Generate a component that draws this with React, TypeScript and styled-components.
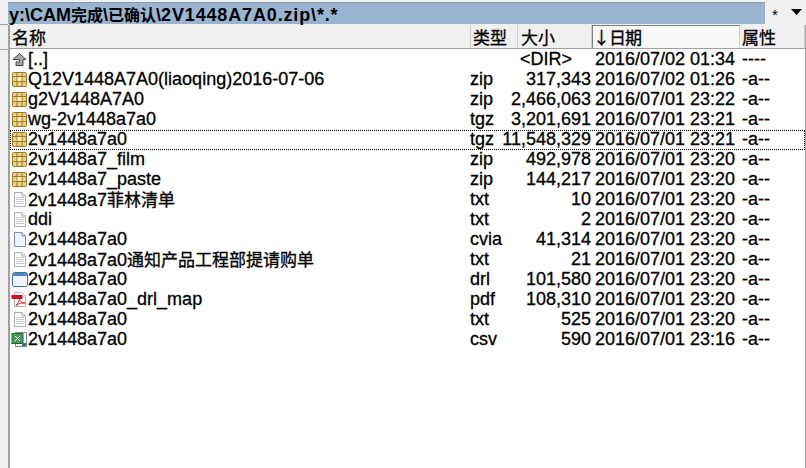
import React from 'react'
import styled, { createGlobalStyle } from 'styled-components'

const GlobalStyle = createGlobalStyle`
  html, body {
    margin: 0;
    padding: 0;
    background: #f0f0f0;
  }
`

const Window = styled.div`
  width: 806px;
  height: 468px;
  overflow: hidden;
  display: flex;
  background: #f0f0f0;
  font-family: "Liberation Sans", "Noto Sans CJK SC", sans-serif;
  color: #000;
`

const Gutter = styled.div`
  width: 8px;
  flex: none;
  height: 24px;
  margin-top: 24px;
  border-top: 1px solid #a0a0a0;
  border-bottom: 1px solid #a0a0a0;
`

const Main = styled.div`
  flex: 1;
  display: flex;
  flex-direction: column;
  min-width: 0;
`

const PathRow = styled.div`
  height: 25px;
  display: flex;
  align-items: flex-start;
  flex: none;
`

const PathBar = styled.div`
  width: 757px;
  height: 22px;
  margin-top: 2px;
  background: #99b4d1;
  border-top: 1px solid #8c9bac;
  font-size: 18px;
  font-weight: bold;
  line-height: 22px;
  padding-left: 1px;
  box-sizing: border-box;
  white-space: nowrap;
`

const PathTail = styled.span`
  letter-spacing: 0.85px;
`

const Cjk = styled.span<{ $bold?: boolean }>`
  font-family: "Noto Sans CJK SC", sans-serif;
  font-size: ${p => (p.$bold ? 16 : 17)}px;
  font-weight: ${p => (p.$bold ? 700 : 400)};
`

const Filter = styled.div`
  flex: 1;
  display: flex;
  align-items: center;
  height: 24px;
  padding-left: 7px;
  gap: 13px;
`

const FilterStar = styled.span`
  font-size: 15px;
  line-height: 15px;
  padding-top: 5px;
`

const Panel = styled.div`
  flex: 1;
  display: flex;
  flex-direction: column;
  background: #fff;
  border-left: 2px solid #a0a0a0;
  border-right: 1px solid #a0a0a0;
`

const Header = styled.div`
  height: 23px;
  display: flex;
  flex: none;
  margin-bottom: 1px;
  background: #f0f0f0;
  border-bottom: 1px solid #a0a0a0;
`

const HeaderCell = styled.div<{ $w: number; $pad?: number; $active?: boolean }>`
  width: ${p => p.$w}px;
  flex: none;
  box-sizing: border-box;
  padding-left: ${p => p.$pad ?? 2}px;
  font-family: "Noto Sans CJK SC", sans-serif;
  font-size: 17px;
  line-height: 23px;
  white-space: nowrap;
  -webkit-text-stroke: 0.3px #000;
  border-right: 1px solid #d0d0d0;
  ${p => p.$active && `
    background: #f7f7f7;
    border-top: 1px solid #808080;
    border-left: 1px solid #808080;
    line-height: 22px;
    letter-spacing: -1px;
  `}
`

const Row = styled.div<{ $focus?: boolean }>`
  height: 20px;
  display: flex;
  align-items: center;
  box-sizing: border-box;
  font-size: 18px;
  line-height: 19px;
  padding-bottom: 1px;
  -webkit-text-stroke: 0.3px #000;
  white-space: nowrap;
  outline: ${p => (p.$focus ? '1px dotted #000' : 'none')};
  outline-offset: -1px;
`

const IconSlot = styled.div`
  width: 18px;
  height: 17px;
  flex: none;
  padding-left: 1px;
  box-sizing: border-box;
`

const NameCell = styled.div`
  width: 442px;
  flex: none;
`

const TypeCell = styled.div`
  width: 40px;
  flex: none;
`

const SizeCell = styled.div<{ $dir?: boolean }>`
  width: 81px;
  flex: none;
  display: flex;
  justify-content: flex-end;
  box-sizing: border-box;
  padding-right: ${p => (p.$dir ? 19 : 0)}px;
`

const DateCell = styled.div`
  width: 151px;
  flex: none;
  padding-left: 4px;
  box-sizing: border-box;
`

const AttrCell = styled.div`
  flex: 1;
`

const Caret = styled.svg`
  width: 11px;
  height: 6px;
`

type IconKind = 'up' | 'archive' | 'text' | 'doc' | 'window' | 'pdf' | 'excel'

const FileIcon = ({ kind }: { kind: IconKind }) => {
  switch (kind) {
    case 'up':
      return (
        <svg width="17" height="17" viewBox="0 0 17 17">
          <path d="M8.5 2.5 L15 8.5 H12 V14.5 H5 V11 H8.5 V8.5 H2 Z" fill="#a8a8a8" stroke="#444" />
        </svg>
      )
    case 'archive':
      return (
        <svg width="17" height="17" viewBox="0 0 17 17">
          <rect x="1.5" y="1.5" width="14" height="14" rx="1.5" fill="#edd084" stroke="#9a7a2c" />
          <path d="M1.5 5.5 H15.5 M1.5 10.5 H15.5 M6 1.5 V15.5 M11 1.5 V15.5" stroke="#9a7a2c" fill="none" />
          <rect x="6.5" y="6" width="4" height="4" fill="#fbeebc" />
        </svg>
      )
    case 'text':
      return (
        <svg width="17" height="17" viewBox="0 0 17 17">
          <path d="M3.5 1.5 H11 L14.5 5 V15.5 H3.5 Z" fill="#fdfdfd" stroke="#a8b0b8" />
          <path d="M11 1.5 V5 H14.5" fill="#e4e8ec" stroke="#a8b0b8" />
          <path d="M5 6.5 H13 M5 8.5 H13 M5 10.5 H13 M5 12.5 H13" stroke="#c8ccd0" />
        </svg>
      )
    case 'doc':
      return (
        <svg width="17" height="17" viewBox="0 0 17 17">
          <path d="M3.5 1.5 H11 L14.5 5 V15.5 H3.5 Z" fill="#eef4ff" stroke="#6f8fc0" />
          <path d="M11 1.5 V5 H14.5" fill="#cfdcf2" stroke="#6f8fc0" />
        </svg>
      )
    case 'window':
      return (
        <svg width="17" height="17" viewBox="0 0 17 17">
          <rect x="1.5" y="1.5" width="15" height="14" rx="2" fill="#f0f5fc" stroke="#3a6ea5" />
          <rect x="2" y="2" width="14" height="3" fill="#4f86c6" />
        </svg>
      )
    case 'pdf':
      return (
        <svg width="17" height="17" viewBox="0 0 17 17">
          <path d="M3.5 1.5 H11 L14.5 5 V15.5 H3.5 Z" fill="#fff" stroke="#b0b0b0" />
          <rect x="0.5" y="4" width="11" height="4" fill="#c8141c" />
          <path d="M5 14.5 C8 11 8.5 9 8 8 C10 11 12 12.5 14 12 C11 11.5 8 12.5 5 14.5 Z" fill="none" stroke="#d8202a" />
        </svg>
      )
    case 'excel':
      return (
        <svg width="17" height="17" viewBox="0 0 17 17">
          <rect x="4.5" y="1.5" width="11" height="14" fill="#fff" stroke="#7a8a9a" />
          <rect x="1" y="2.5" width="11" height="10" fill="#4a9a58" stroke="#1f6a2e" />
          <path d="M4 5 L9 10 M9 5 L4 10" stroke="#fff" />
          <rect x="11" y="12" width="4" height="3" fill="#3a6ea5" />
        </svg>
      )
  }
}

type FileRow = {
  icon: IconKind
  name: React.ReactNode
  ext: string
  size: string
  date: string
  attr: string
  focus?: boolean
}

const files: FileRow[] = [
  { icon: 'up', name: '[..]', ext: '', size: '<DIR>', date: '2016/07/02 01:34', attr: '----' },
  { icon: 'archive', name: 'Q12V1448A7A0(liaoqing)2016-07-06', ext: 'zip', size: '317,343', date: '2016/07/02 01:26', attr: '-a--' },
  { icon: 'archive', name: 'g2V1448A7A0', ext: 'zip', size: '2,466,063', date: '2016/07/01 23:22', attr: '-a--' },
  { icon: 'archive', name: 'wg-2v1448a7a0', ext: 'tgz', size: '3,201,691', date: '2016/07/01 23:21', attr: '-a--' },
  { icon: 'archive', name: '2v1448a7a0', ext: 'tgz', size: '11,548,329', date: '2016/07/01 23:21', attr: '-a--', focus: true },
  { icon: 'archive', name: '2v1448a7_film', ext: 'zip', size: '492,978', date: '2016/07/01 23:20', attr: '-a--' },
  { icon: 'archive', name: '2v1448a7_paste', ext: 'zip', size: '144,217', date: '2016/07/01 23:20', attr: '-a--' },
  { icon: 'text', name: <>2v1448a7<Cjk>菲林清单</Cjk></>, ext: 'txt', size: '10', date: '2016/07/01 23:20', attr: '-a--' },
  { icon: 'text', name: 'ddi', ext: 'txt', size: '2', date: '2016/07/01 23:20', attr: '-a--' },
  { icon: 'doc', name: '2v1448a7a0', ext: 'cvia', size: '41,314', date: '2016/07/01 23:20', attr: '-a--' },
  { icon: 'text', name: <>2v1448a7a0<Cjk>通知产品工程部提请购单</Cjk></>, ext: 'txt', size: '21', date: '2016/07/01 23:20', attr: '-a--' },
  { icon: 'window', name: '2v1448a7a0', ext: 'drl', size: '101,580', date: '2016/07/01 23:20', attr: '-a--' },
  { icon: 'pdf', name: '2v1448a7a0_drl_map', ext: 'pdf', size: '108,310', date: '2016/07/01 23:20', attr: '-a--' },
  { icon: 'text', name: '2v1448a7a0', ext: 'txt', size: '525', date: '2016/07/01 23:20', attr: '-a--' },
  { icon: 'excel', name: '2v1448a7a0', ext: 'csv', size: '590', date: '2016/07/01 23:16', attr: '-a--' },
]

const App = () => {
  return (
    <>
      <GlobalStyle />
      <Window>
        <Gutter />
        <Main>
          <PathRow>
            <PathBar>
              y:\CAM<Cjk $bold>完成</Cjk>\<Cjk $bold>已确认</Cjk>\<PathTail>2V1448A7A0.zip\*.*</PathTail>
            </PathBar>
            <Filter>
              <FilterStar>*</FilterStar>
              <Caret viewBox="0 0 11 6">
                <path d="M0 0 H11 L5.5 6 Z" fill="#000" />
              </Caret>
            </Filter>
          </PathRow>
          <Panel>
            <Header>
              <HeaderCell $w={461}>名称</HeaderCell>
              <HeaderCell $w={47}>类型</HeaderCell>
              <HeaderCell $w={74} $pad={3}>大小</HeaderCell>
              <HeaderCell $w={148} $pad={0} $active>↓日期</HeaderCell>
              <HeaderCell $w={65}>属性</HeaderCell>
            </Header>
            {files.map((file, i) => (
              <Row key={i} $focus={file.focus}>
                <IconSlot>
                  <FileIcon kind={file.icon} />
                </IconSlot>
                <NameCell>{file.name}</NameCell>
                <TypeCell>{file.ext}</TypeCell>
                <SizeCell $dir={file.size === '<DIR>'}>{file.size}</SizeCell>
                <DateCell>{file.date}</DateCell>
                <AttrCell>{file.attr}</AttrCell>
              </Row>
            ))}
          </Panel>
        </Main>
      </Window>
    </>
  )
}

export default App
